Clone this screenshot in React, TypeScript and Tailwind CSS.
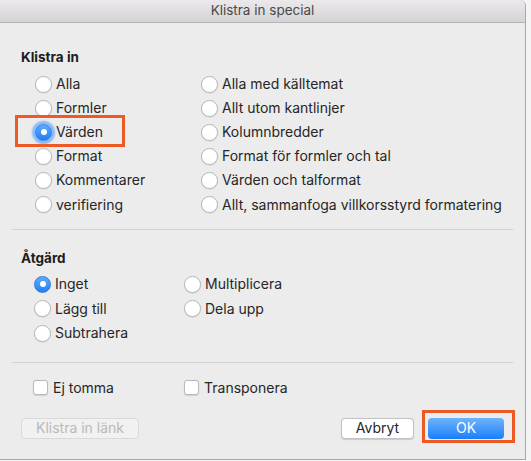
import React from "react";

const font = { fontFamily: 'Inter, "Liberation Sans", Arial, sans-serif' };

function Radio({ checked = false, glow = false }: { checked?: boolean; glow?: boolean }) {
  if (checked) {
    return (
      <span
        className={
          "flex h-[17px] w-[17px] shrink-0 items-center justify-center rounded-full bg-gradient-to-b from-[#5fabfb] to-[#1b7ff5] border border-[#2a7fe0] " +
          (glow ? "shadow-[0_0_2px_3px_rgba(100,165,250,0.75)]" : "")
        }
      >
        <span className="h-[6px] w-[6px] rounded-full bg-white" />
      </span>
    );
  }
  return (
    <span className="h-[17px] w-[17px] shrink-0 rounded-full border border-[#b9b9b9] bg-white shadow-[0_0.5px_1px_rgba(0,0,0,0.15)]" />
  );
}

function RadioRow({
  label,
  checked,
  glow,
  h = "h-[24px]",
}: {
  label: string;
  checked?: boolean;
  glow?: boolean;
  h?: string;
}) {
  return (
    <div className={"flex items-center gap-[4px] " + h}>
      <Radio checked={checked} glow={glow} />
      <span className="text-[14px] leading-none text-[#262626] whitespace-nowrap">{label}</span>
    </div>
  );
}

function Checkbox({ label }: { label: string }) {
  return (
    <div className="flex h-[24px] items-center gap-[5px]">
      <span className="h-[15px] w-[15px] shrink-0 rounded-[3px] border border-[#b9b9b9] bg-white shadow-[0_0.5px_1px_rgba(0,0,0,0.12)]" />
      <span className="text-[14px] leading-none text-[#262626] whitespace-nowrap">{label}</span>
    </div>
  );
}

export default function App() {
  return (
    <div className="flex h-[461px] w-[531px] overflow-hidden bg-[#f4f4f4]" style={font}>
      <div className="flex h-[460px] w-[526px] shrink-0 flex-col rounded-tr-[6px] border-b border-r border-[#a9a9a9] bg-[#ececec]">
        {/* Title bar */}
        <div className="flex h-[23px] shrink-0 items-center justify-center rounded-tr-[6px] border-b border-[#b4b4b4] bg-gradient-to-b from-[#ebe9eb] to-[#d5d3d5]">
          <span className="text-[13.5px] leading-none text-[#4a4a4a]">Klistra in special</span>
        </div>

        <div className="flex flex-1 flex-col px-[12px]">
          {/* Klistra in section */}
          <div className="mt-[26px] pl-[9px] text-[13.5px] font-bold leading-[16px] text-[#1c1c1c]">Klistra in</div>
          <div className="mt-[7px] flex pl-[23px]">
            <div className="flex w-[166px] flex-col">
              <RadioRow label="Alla" />
              <RadioRow label="Formler" />
              <div className="relative">
                <RadioRow label="Värden" checked glow />
                <div className="pointer-events-none absolute left-[-20px] top-[-5px] h-[32px] w-[110px] border-[3px] border-[#ee5a24]" />
              </div>
              <RadioRow label="Format" />
              <RadioRow label="Kommentarer" />
              <RadioRow label="verifiering" h="h-[25px]" />
            </div>
            <div className="flex flex-col">
              <RadioRow label="Alla med källtemat" />
              <RadioRow label="Allt utom kantlinjer" />
              <RadioRow label="Kolumnbredder" />
              <RadioRow label="Format för formler och tal" />
              <RadioRow label="Värden och talformat" />
              <RadioRow label="Allt, sammanfoga villkorsstyrd formatering" h="h-[25px]" />
            </div>
          </div>

          <div className="mt-[12px] h-px bg-[#d2d2d2]" />

          {/* Åtgärd section */}
          <div className="mt-[20px] pl-[9px] text-[13.5px] font-bold leading-[16px] text-[#1c1c1c]">Åtgärd</div>
          <div className="mt-[6px] flex pl-[22px]">
            <div className="flex w-[150px] flex-col">
              <RadioRow label="Inget" checked h="h-[24.5px]" />
              <RadioRow label="Lägg till" h="h-[24.5px]" />
              <RadioRow label="Subtrahera" h="h-[24.5px]" />
            </div>
            <div className="flex flex-col">
              <RadioRow label="Multiplicera" h="h-[24.5px]" />
              <RadioRow label="Dela upp" h="h-[24.5px]" />
            </div>
          </div>

          <div className="mt-[16px] h-px bg-[#d2d2d2]" />

          <div className="mt-[13px] flex pl-[21px]">
            <div className="w-[151px]">
              <Checkbox label="Ej tomma" />
            </div>
            <Checkbox label="Transponera" />
          </div>

          {/* Buttons */}
          <div className="mt-[18px] flex items-center pl-[9px] pr-[9px]">
            <div className="flex h-[21px] w-[118px] items-center justify-center rounded-[4px] border border-[#d9d9d9] bg-[#f1f1f1] text-[14px] leading-none text-[#b9b9b9]">
              Klistra in länk
            </div>
            <div className="flex-1" />
            <div className="flex h-[21px] w-[73px] items-center justify-center rounded-[4px] border border-[#c3c3c3] bg-white text-[14px] leading-none text-[#262626] shadow-[0_0.5px_1px_rgba(0,0,0,0.15)]">
              Avbryt
            </div>
            <div className="relative ml-[14px]">
              <div className="flex h-[21px] w-[76px] items-center justify-center rounded-[4px] bg-gradient-to-b from-[#6db3fb] to-[#0f7ffb] text-[14px] leading-none text-white">
                OK
              </div>
              <div className="pointer-events-none absolute left-[-6px] top-[-8px] h-[33px] w-[93px] border-[3px] border-[#ee5a24]" />
            </div>
          </div>
        </div>
      </div>
      <div className="flex-1 bg-[#f4f4f4]" />
    </div>
  );
}
